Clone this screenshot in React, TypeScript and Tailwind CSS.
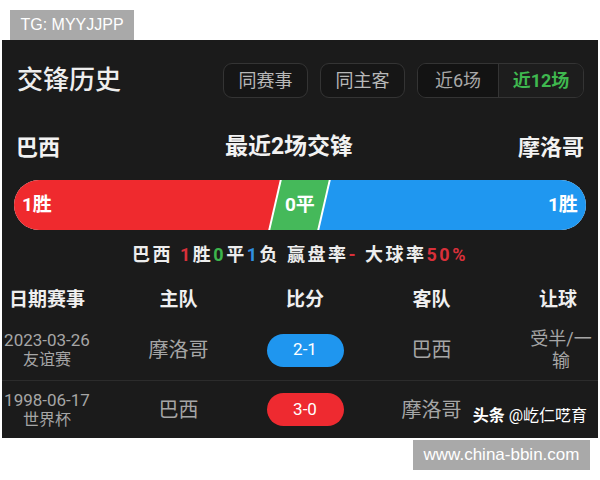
import React from 'react';

interface Match {
  date: string;
  comp: string;
  home: string;
  score: string;
  away: string;
  handicap: string[];
  pill: string;
}

const matches: Match[] = [
  { date: '2023-03-26', comp: '友谊赛', home: '摩洛哥', score: '2-1', away: '巴西', handicap: ['受半/一', '输'], pill: 'bg-[#1f96ef]' },
  { date: '1998-06-17', comp: '世界杯', home: '巴西', score: '3-0', away: '摩洛哥', handicap: [], pill: 'bg-[#ee2a30]' },
];

const cols = 'grid grid-cols-[90px_1fr_80px_1fr_80px] items-center text-center';

const FilterButton: React.FC<{ label: string }> = ({ label }) => (
  <div className="flex h-[35px] w-[85px] items-center justify-center rounded-[9px] border border-[#343434] bg-[#161616] text-[18px] text-[#b8b8b8]">
    {label}
  </div>
);

const App: React.FC = () => {
  return (
    <div className="min-h-[480px] bg-white pt-[10px] font-[Roboto,'Noto_Sans_CJK_SC',sans-serif]">
      <div className="ml-[10px] flex h-[30px] w-[124px] items-center justify-center bg-[#a9a9a9] font-['Liberation_Sans',sans-serif] text-[16px] text-white">
        TG: MYYJJPP
      </div>

      <div className="relative mx-[2px] h-[398px] bg-[#1b1b1b]">
        {/* title + filters */}
        <div className="flex h-[58px] items-end pl-[15px] pr-[14px]">
          <div className="flex h-[35px] w-full items-center">
            <h1 className="text-[26px] font-medium text-[#eeeeee]">交锋历史</h1>
            <div className="ml-auto flex gap-[12px]">
              <FilterButton label="同赛事" />
              <FilterButton label="同主客" />
              <div className="flex h-[35px] w-[167px] overflow-hidden rounded-[9px] border border-[#343434] text-[18px]">
                <div className="flex w-[81px] items-center justify-center border-r border-[#343434] bg-[#131313] text-[#a8a8a8]">近6场</div>
                <div className="flex flex-1 items-center justify-center bg-[#1d1d1d] font-bold text-[#3fb84f]">近12场</div>
              </div>
            </div>
          </div>
        </div>

        {/* teams */}
        <div className="mt-[34px] flex h-[30px] items-center justify-between px-[14px] text-[22px] font-bold text-[#f2f2f2]">
          <span>巴西</span>
          <span className="text-[23px]">最近2场交锋</span>
          <span>摩洛哥</span>
        </div>

        {/* win/draw/loss bar */}
        <div className="mx-[12px] mt-[18px] h-[50px] overflow-hidden rounded-full">
          <div className="-mx-[8px] flex h-full -skew-x-[13deg] gap-[2px] bg-white text-[19px] font-bold text-white">
            <div className="flex w-[268px] items-center bg-[#ef2a2e] pl-[16px]">
              <span className="skew-x-[13deg]">1胜</span>
            </div>
            <div className="flex w-[47px] items-center justify-center bg-[#45b95a]">
              <span className="skew-x-[13deg]">0平</span>
            </div>
            <div className="flex flex-1 items-center justify-end bg-[#1f97f0] pr-[16px]">
              <span className="skew-x-[13deg]">1胜</span>
            </div>
          </div>
        </div>

        {/* summary */}
        <div className="mt-[12px] flex h-[24px] items-center justify-center text-[18px] font-bold tracking-[2.5px] text-[#ededed]">
          <span>巴西&nbsp;</span>
          <span className="text-[#d8303a]">1</span>
          <span>胜</span>
          <span className="text-[#3cb44c]">0</span>
          <span>平</span>
          <span className="text-[#2f8fe0]">1</span>
          <span>负 赢盘率</span>
          <span className="text-[#d8303a]">-</span>
          <span>&nbsp;大球率</span>
          <span className="text-[#d8303a]">50%</span>
        </div>

        {/* table */}
        <div className={`${cols} mt-[14px] h-[40px] text-[19px] font-bold text-[#efefef]`}>
          <span>日期赛事</span>
          <span>主队</span>
          <span>比分</span>
          <span>客队</span>
          <span>让球</span>
        </div>

        {matches.map((m, i) => (
          <div
            key={m.date}
            className={`${cols} ${i === 0 ? 'h-[61px] border-b border-[#2c2c2c]' : 'h-[57px]'} text-[#a6a6a6]`}
          >
            <div className="flex flex-col items-center leading-[19px]">
              <span className="text-[17px]">{m.date}</span>
              <span className="text-[16px]">{m.comp}</span>
            </div>
            <span className="text-[20px]">{m.home}</span>
            <div className="flex justify-center">
              <span className={`flex h-[33px] w-[77px] items-center justify-center rounded-full ${m.pill} text-[17px] text-white`}>
                {m.score}
              </span>
            </div>
            <span className="text-[20px]">{m.away}</span>
            <div className="flex flex-col items-center pl-[6px] text-[18px] leading-[22px]">
              {m.handicap.map((h) => (
                <span key={h} className="whitespace-nowrap">{h}</span>
              ))}
            </div>
          </div>
        ))}

        <div className="absolute bottom-[10px] right-[11px] text-[16px] text-white">
          <span className="font-bold">头条</span> @屹仁呓育
        </div>
      </div>

      <div className="ml-[413px] mt-[2px] flex h-[30px] w-[177px] items-center justify-center bg-[#a9a9a9] font-['Liberation_Sans',sans-serif] text-[17px] text-white">
        www.china-bbin.com
      </div>
    </div>
  );
};

export default App;
